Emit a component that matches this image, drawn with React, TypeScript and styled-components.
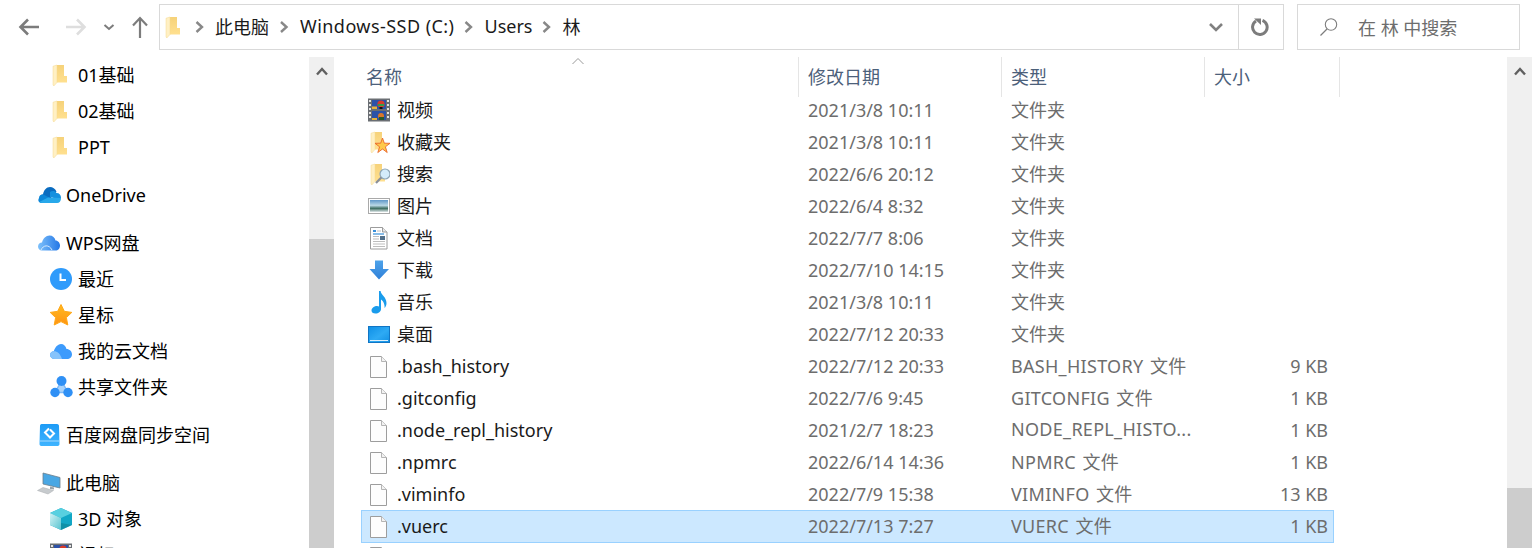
import React from "react";
import styled, { createGlobalStyle } from "styled-components";

const Global = createGlobalStyle`
  html, body { margin: 0; padding: 0; background: #fff; overflow: hidden; }
  body { font-family: "Noto Sans", "Noto Sans CJK SC", sans-serif; font-size: 18px; color: #000; }
  * { box-sizing: border-box; }
`;

const hasCjk = (s: string) => /[^\x00-\x7f]/.test(s);

const Window = styled.div`
  width: 1533px; height: 548px; overflow: hidden; display: flex; flex-direction: column; background: #fff;
`;
const Toolbar = styled.div`
  height: 57px; flex: none; display: flex; align-items: flex-start; padding: 4px 13px 0 0;
`;
const NavGroup = styled.div`
  width: 159px; height: 46px; flex: none; display: flex; align-items: center; padding-left: 17px;
`;
const NavButton = styled.svg<{ $w: number; $ml?: number }>`
  width: ${p => p.$w}px; height: 24px; flex: none; margin-left: ${p => p.$ml ?? 0}px; display: block;
`;
const AddressBar = styled.div`
  width: 1125px; height: 46px; flex: none; border: 1px solid #d9d9d9; display: flex; align-items: center; padding-left: 3px;
`;
const Crumb = styled.span<{ $wide?: boolean }>`
  white-space: nowrap; color: #1a1a1a; padding-bottom: 2px;
  letter-spacing: ${p => (p.$wide ? "0.45px" : "0")};
`;
const CrumbSep = styled.svg<{ $w: number }>`
  width: ${p => p.$w}px; height: 12px; flex: none;
`;
const Spacer = styled.div` flex: 1; `;
const AddressButton = styled.div<{ $w: number; $line?: boolean }>`
  width: ${p => p.$w}px; height: 100%; display: flex; align-items: center; justify-content: center;
  border-left: ${p => (p.$line ? "1px solid #d9d9d9" : "none")};
`;
const SearchBox = styled.div`
  width: 223px; height: 46px; flex: none; margin-left: 13px; border: 1px solid #d9d9d9;
  display: flex; align-items: center; padding-left: 21px; color: #6d6d6d; gap: 20px;
`;
const Main = styled.div`
  flex: 1; display: flex; min-height: 0; padding-right: 1px;
`;
const Sidebar = styled.div`
  width: 309px; flex: none; overflow: hidden;
`;
const NavSection = styled.div` margin-bottom: 12px; `;
const NavRow = styled.div<{ $child?: boolean }>`
  height: 36px; display: flex; align-items: center; white-space: nowrap;
  padding-left: ${p => (p.$child ? 50 : 37)}px;
`;
const NavIcon = styled.span<{ $child?: boolean }>`
  width: ${p => (p.$child ? 28 : 29)}px; flex: none; display: flex; align-items: center;
`;
const NavLabel = styled.span<{ $cjk: boolean }>`
  padding-bottom: ${p => (p.$cjk ? 2 : 0)}px;
`;
const Scrollbar = styled.div<{ $thumbTop: number }>`
  width: 25px; flex: none; background: #f0f0f0; display: flex; flex-direction: column; align-items: center;
  position: relative; padding-top: 10px;
  &::after {
    content: ""; position: absolute; left: 0; right: 0; top: ${p => p.$thumbTop}px; bottom: 0; background: #cdcdcd;
  }
`;
const FilePane = styled.div`
  flex: 1; min-width: 0; padding-left: 23px; overflow: hidden;
`;
const HeaderRow = styled.div`
  height: 40px; margin-bottom: -3px; display: grid; grid-template-columns: 442px 203px 203px 135px; color: #4c607a;
`;
const HeaderCell = styled.div`
  position: relative; height: 40px; padding: 8px 0 0 9px; border-right: 1px solid #e5e5e5; line-height: 24px;
`;
const SortCaret = styled.svg`
  position: absolute; left: 214px; top: 0; width: 14px; height: 8px;
`;
const Row = styled.div<{ $selected?: boolean }>`
  margin-left: 4px; width: 973px; height: ${p => (p.$selected ? 33 : 32)}px;
  margin-bottom: ${p => (p.$selected ? -2 : 0)}px;
  padding-bottom: ${p => (p.$selected ? 2 : 0)}px;
  display: grid; grid-template-columns: 446px 203px 1fr 100px; align-items: center; white-space: nowrap;
  border: 1px solid ${p => (p.$selected ? "#99d1ff" : "transparent")};
  background: ${p => (p.$selected ? "#cce8ff" : "transparent")};
`;
const NameCell = styled.div`
  display: flex; align-items: center; padding-left: 6px; color: #1a1a1a;
`;
const NameText = styled.span<{ $cjk: boolean }>`
  padding-bottom: ${p => (p.$cjk ? 2 : 0)}px;
`;
const FileIconSlot = styled.span`
  width: 29px; flex: none; display: flex; align-items: center;
`;
const DateCell = styled.div`
  color: #6d6d6d; overflow: hidden;
`;
const TypeCell = styled.div<{ $latin: boolean }>`
  color: #6d6d6d; overflow: hidden; padding-bottom: 2px;
  letter-spacing: ${p => (p.$latin ? "0.3px" : "0")};
  word-spacing: ${p => (p.$latin ? "1.5px" : "0")};
`;
const SizeCell = styled.div`
  color: #6d6d6d; text-align: right; padding-right: 5px;
`;

const Ic = styled.svg<{ $w?: number }>`
  width: ${p => p.$w ?? 22}px; height: 24px; display: block; flex: none;
`;

const folderShape = (id: string) => (
  <>
    <defs>
      <linearGradient id={id} x1="0" y1="0" x2="0" y2="1">
        <stop offset="0" stopColor="#f6d27a" />
        <stop offset="1" stopColor="#ffe08f" />
      </linearGradient>
    </defs>
    <path d="M7 2H14V13H17V19.5H7Z" fill={`url(#${id})`} />
    <path d="M3 3.2L7 2V19.5L3.8 23L3 22Z" fill="#fff0c4" stroke="#f4d98f" strokeWidth=".5" />
  </>
);

const FolderIcon = () => <Ic viewBox="0 0 22 24">{folderShape("fgA")}</Ic>;
const FavIcon = () => (
  <Ic viewBox="0 0 22 24">
    {folderShape("fgB")}
    <path d="M14.5 8L16.3 13.2L22 13.3L17.4 16.8L19.2 22.5L14.5 19L9.8 22.5L11.6 16.8L7 13.3L12.7 13.2Z" fill="#ffc94a" stroke="#e9672a" strokeWidth=".9" />
  </Ic>
);
const SearchFolderIcon = () => (
  <Ic viewBox="0 0 22 24">
    {folderShape("fgC")}
    <circle cx="17" cy="12" r="5" fill="#d4ecfa" stroke="#8ea6b6" strokeWidth="1.2" />
    <path d="M13.3 15.5L8 21" stroke="#8a8f98" strokeWidth="2.2" />
  </Ic>
);
const VideoIcon = () => (
  <Ic viewBox="0 0 22 24">
    <rect x="0" y="0.5" width="22" height="23" fill="#6a6e73" />
    <path d="M1 2h2v2H1zM1 6h2v2H1zM1 10h2v2H1zM1 14h2v2H1zM1 18h2v2H1zM19 2h2v2h-2zM19 6h2v2h-2zM19 10h2v2h-2zM19 14h2v2h-2zM19 18h2v2h-2z" fill="#e4e4e4" />
    <rect x="4" y="2" width="14" height="9" fill="#2c52a8" />
    <rect x="4" y="13" width="14" height="9" fill="#2c52a8" />
    <circle cx="13" cy="6" r="3.6" fill="#d93c2a" />
    <path d="M10 6h6v2h-6z" fill="#2fa04a" />
    <path d="M11.5 9h3v2h-3z" fill="#111" />
    <path d="M4 8.5h5v2.5H4zM4 20h5v2H4z" fill="#e9b23a" />
    <circle cx="13" cy="18" r="3" fill="#d9772a" />
    <path d="M11 19h5v3h-5z" fill="#2c5a2a" />
  </Ic>
);
const PictureIcon = () => (
  <Ic viewBox="0 0 22 24">
    <defs>
      <linearGradient id="pic" x1="0" y1="0" x2="0" y2="1">
        <stop offset="0" stopColor="#5f97c8" />
        <stop offset=".45" stopColor="#b9d8e6" />
        <stop offset=".7" stopColor="#3f6f62" />
        <stop offset="1" stopColor="#dfe8ea" />
      </linearGradient>
    </defs>
    <rect x=".5" y="4.5" width="21" height="15" fill="#fff" stroke="#a9a9a9" />
    <rect x="2" y="6" width="18" height="12" fill="url(#pic)" />
  </Ic>
);
const DocIcon = () => (
  <Ic viewBox="0 0 22 24">
    <path d="M2.5 1.5H14.5L19 6V23H2.5Z" fill="#fff" stroke="#9c9c9c" />
    <path d="M14.5 1.5V6H19" fill="#e8e8e8" stroke="#9c9c9c" />
    <path d="M5 8h11" stroke="#3a8fd8" strokeWidth="1.2" />
    <path d="M5 5h3" stroke="#3a8fd8" strokeWidth="2" />
    <path d="M9 5h4M5 10.5h6M5 13h6M5 15.5h12M5 18h12M5 20.5h12" stroke="#bdbdbd" />
    <rect x="12" y="10" width="5" height="4" fill="#53708a" />
  </Ic>
);
const DownloadIcon = () => (
  <Ic viewBox="0 0 22 24">
    <defs>
      <linearGradient id="dl" x1="0" y1="0" x2="0" y2="1">
        <stop offset="0" stopColor="#4ea3ea" />
        <stop offset="1" stopColor="#2f80d8" />
      </linearGradient>
    </defs>
    <path d="M7 2.5H15V11H21L11 21.5L1.5 11H7Z" fill="url(#dl)" />
  </Ic>
);
const MusicIcon = () => (
  <Ic viewBox="0 0 22 24">
    <path d="M11 1H12.6C13 5 18.5 7 18.5 13C18.5 15.5 17.5 17 16.5 18C17 15 15.5 11 13 9.5V19C13 21.7 10.5 23.5 7.5 23.5C5 23.5 3.5 22.3 3.5 20.5C3.5 18 6.5 16 9 16C9.8 16 10.5 16.2 11 16.5Z" fill="#1a9cec" />
  </Ic>
);
const DesktopIcon = () => (
  <Ic viewBox="0 0 22 24">
    <defs>
      <linearGradient id="dk" x1="0" y1="0" x2="1" y2="1">
        <stop offset="0" stopColor="#0e8fe6" />
        <stop offset=".55" stopColor="#2eaaf4" />
        <stop offset="1" stopColor="#1290e4" />
      </linearGradient>
    </defs>
    <rect x=".5" y="4.5" width="21" height="16" fill="url(#dk)" stroke="#1175c4" />
    <path d="M2 18.5h18" stroke="#dff1fc" strokeWidth="1" />
  </Ic>
);
const FileIcon = () => (
  <Ic viewBox="0 0 22 24">
    <path d="M2.5 2.5H13.5L18.5 7.5V23.5H2.5Z" fill="#fdfdfd" stroke="#9d9d9d" />
    <path d="M13.5 2.5V7.5H18.5" fill="#f2f2f2" stroke="#b5b5b5" />
  </Ic>
);
const OneDriveIcon = () => (
  <Ic $w={24} viewBox="0 0 24 24">
    <path d="M6 11.5C6.5 7.5 9.5 4 13 4C15.8 4 18 5.5 19.5 8.5L13 16H4.5C2 14 3 11.5 6 11.5Z" fill="#0a6cc0" />
    <path d="M2 15C2 12.5 4 11 6.5 11.5L13 15L12 20H4.5C3 20 0 18.5 2 15Z" fill="#0c86d8" />
    <path d="M13 9C15 7.5 18 7.5 19.5 10C22.5 10 24 12 24 15C24 15 18 16 13 14Z" fill="#1490df" />
    <path d="M5 20C4 20 3 19.7 2.3 19L11 14.5L24 15C24 18 22.5 20 20 20Z" fill="#28a8ea" />
  </Ic>
);
const WpsCloudIcon = () => (
  <Ic $w={24} viewBox="0 0 24 24">
    <defs>
      <linearGradient id="wc" x1="0" y1="0" x2="1" y2="0">
        <stop offset="0" stopColor="#7ec1fb" />
        <stop offset="1" stopColor="#2477e6" />
      </linearGradient>
    </defs>
    <path d="M5 19.5C2.5 19.5 1 17.5 1 15.5C1 13 3 11.5 5 11.5C6 7.5 9 4.5 12.5 4.5C15.5 4.5 18 6.5 18.5 9.5C21 9.5 23 12 23 14.5C23 17.5 21 19.5 18.5 19.5Z" fill="url(#wc)" />
    <path d="M4 19C6 14 12 13 15 19" fill="none" stroke="#d6ebff" strokeWidth="1" />
  </Ic>
);
const RecentIcon = () => (
  <Ic viewBox="0 0 22 24">
    <circle cx="11" cy="12" r="11" fill="#2f9bfb" />
    <path d="M10.5 6.5V13H16" fill="none" stroke="#fff" strokeWidth="2" />
  </Ic>
);
const StarIcon = () => (
  <Ic viewBox="0 0 22 24">
    <defs>
      <linearGradient id="st" x1="0" y1="0" x2="0" y2="1">
        <stop offset="0" stopColor="#ffba1f" />
        <stop offset="1" stopColor="#ff9413" />
      </linearGradient>
    </defs>
    <path d="M11 1.5L14.3 8.3L21.8 9.4L16.4 14.6L17.8 22L11 18.6L4.2 22L5.6 14.6L.2 9.4L7.7 8.3Z" fill="url(#st)" stroke="#ffa818" strokeLinejoin="round" strokeWidth="1" />
  </Ic>
);
const CloudDocIcon = () => (
  <Ic viewBox="0 0 22 24">
    <path d="M4.5 20C2 20 0 18.3 0 16C0 13.8 1.8 12.3 3.8 12.2C4.8 8.8 7.5 5 11 5C13.8 5 15.8 7 16.5 10C19.5 10 22 12.3 22 15.2C22 18 20 20 17 20Z" fill="#3d9bfc" />
    <path d="M4.5 20C2 20 0 18.3 0 16C0 13.8 1.8 12.3 3.8 12.2C7 12 10 14 12 20Z" fill="#86c3fb" />
  </Ic>
);
const ShareIcon = () => (
  <Ic $w={23} viewBox="0 0 23 24">
    <path d="M11.5 6L5 17.5H18Z" fill="#a9d3fb" stroke="#7db9f7" strokeWidth="1.5" />
    <circle cx="11.5" cy="6" r="5" fill="#2f90f5" />
    <circle cx="5" cy="17.5" r="4.7" fill="#2f90f5" />
    <circle cx="18" cy="17.5" r="4.7" fill="#2f90f5" />
  </Ic>
);
const BaiduIcon = () => (
  <Ic $w={24} viewBox="0 0 24 24">
    <defs>
      <linearGradient id="bd" x1="0" y1="0" x2="0" y2="1">
        <stop offset="0" stopColor="#1d9bf6" />
        <stop offset="1" stopColor="#3fb4ff" />
      </linearGradient>
    </defs>
    <path d="M4.5 1H20C21.5 1 22 2 22 3L22.5 21C22.5 22.5 21.5 23 20 23H5C3.5 23 2.5 22.5 2.5 21L3 3C3 2 3.5 1 4.5 1Z" fill="url(#bd)" />
    <path d="M3 18H22" stroke="#a9dcff" strokeWidth="1" />
    <path d="M12 5.5L8 9.5L11 12.5M13 6.5L17 10.5L13 14.5L11 12.5" fill="none" stroke="#fff" strokeWidth="2" />
  </Ic>
);
const PcIcon = () => (
  <Ic $w={24} viewBox="0 0 24 24">
    <path d="M6 2L23 6.5V17L6 13Z" fill="#49a7e4" stroke="#6d7f8c" strokeWidth=".8" />
    <path d="M13 15.5L17 16.5V18.5L13 18Z" fill="#9aa3aa" />
    <path d="M.5 19.5L6 16.5L16.5 19.5L11 23Z" fill="#c7cbce" stroke="#a9adb0" strokeWidth=".5" />
  </Ic>
);
const CubeIcon = () => (
  <Ic viewBox="0 0 22 24">
    <defs>
      <linearGradient id="cb" x1="0" y1="0" x2="1" y2="1">
        <stop offset="0" stopColor="#d3f3f5" />
        <stop offset="1" stopColor="#57c4d0" />
      </linearGradient>
    </defs>
    <path d="M11 1L22 6V18L11 23L0 18V6Z" fill="#12a7c6" />
    <path d="M11 1L22 6L11 11L0 6Z" fill="#58d0e0" />
    <path d="M0 6L11 11V23L0 18Z" fill="url(#cb)" />
    <path d="M11 16L22 18L11 23Z" fill="#0b7d8e" opacity=".55" />
  </Ic>
);

const Chevron = ({ w }: { w: number }) => (
  <CrumbSep $w={w} viewBox={`0 0 ${w} 12`}>
    <path d={`M${w / 2 - 3.5} 1L${w / 2 + 2} 6L${w / 2 - 3.5} 11`} fill="none" stroke="#888" strokeWidth="2.4" />
  </CrumbSep>
);

const UpChevron = () => (
  <svg width="12" height="9" viewBox="0 0 12 9" style={{ position: "relative", zIndex: 1 }}>
    <path d="M1 7.5L6 2L11 7.5" fill="none" stroke="#606060" strokeWidth="2.4" />
  </svg>
);

type NavItem = { icon: React.ReactNode; label: string; child?: boolean };
const navSections: NavItem[][] = [
  [
    { icon: <FolderIcon />, label: "01基础", child: true },
    { icon: <FolderIcon />, label: "02基础", child: true },
    { icon: <FolderIcon />, label: "PPT", child: true },
  ],
  [{ icon: <OneDriveIcon />, label: "OneDrive" }],
  [
    { icon: <WpsCloudIcon />, label: "WPS网盘" },
    { icon: <RecentIcon />, label: "最近", child: true },
    { icon: <StarIcon />, label: "星标", child: true },
    { icon: <CloudDocIcon />, label: "我的云文档", child: true },
    { icon: <ShareIcon />, label: "共享文件夹", child: true },
  ],
  [{ icon: <BaiduIcon />, label: "百度网盘同步空间" }],
  [
    { icon: <PcIcon />, label: "此电脑" },
    { icon: <CubeIcon />, label: "3D 对象", child: true },
    { icon: <VideoIcon />, label: "视频", child: true },
  ],
];

type FileItem = { icon: React.ReactNode; name: string; date: string; type: string; size?: string; selected?: boolean };
const files: FileItem[] = [
  { icon: <VideoIcon />, name: "视频", date: "2021/3/8 10:11", type: "文件夹" },
  { icon: <FavIcon />, name: "收藏夹", date: "2021/3/8 10:11", type: "文件夹" },
  { icon: <SearchFolderIcon />, name: "搜索", date: "2022/6/6 20:12", type: "文件夹" },
  { icon: <PictureIcon />, name: "图片", date: "2022/6/4 8:32", type: "文件夹" },
  { icon: <DocIcon />, name: "文档", date: "2022/7/7 8:06", type: "文件夹" },
  { icon: <DownloadIcon />, name: "下载", date: "2022/7/10 14:15", type: "文件夹" },
  { icon: <MusicIcon />, name: "音乐", date: "2021/3/8 10:11", type: "文件夹" },
  { icon: <DesktopIcon />, name: "桌面", date: "2022/7/12 20:33", type: "文件夹" },
  { icon: <FileIcon />, name: ".bash_history", date: "2022/7/12 20:33", type: "BASH_HISTORY 文件", size: "9 KB" },
  { icon: <FileIcon />, name: ".gitconfig", date: "2022/7/6 9:45", type: "GITCONFIG 文件", size: "1 KB" },
  { icon: <FileIcon />, name: ".node_repl_history", date: "2021/2/7 18:23", type: "NODE_REPL_HISTO...", size: "1 KB" },
  { icon: <FileIcon />, name: ".npmrc", date: "2022/6/14 14:36", type: "NPMRC 文件", size: "1 KB" },
  { icon: <FileIcon />, name: ".viminfo", date: "2022/7/9 15:38", type: "VIMINFO 文件", size: "13 KB" },
  { icon: <FileIcon />, name: ".vuerc", date: "2022/7/13 7:27", type: "VUERC 文件", size: "1 KB", selected: true },
  { icon: <FileIcon />, name: "", date: "", type: "" },
];

export default function App() {
  return (
    <Window>
      <Global />
      <Toolbar>
        <NavGroup>
          <NavButton $w={24} viewBox="0 0 24 24">
            <path d="M22 12H4M11 4.5L3.5 12L11 19.5" fill="none" stroke="#7c7c7c" strokeWidth="2.6" />
          </NavButton>
          <NavButton $w={24} $ml={22} viewBox="0 0 24 24">
            <path d="M3 12H21M14 4.5L21.5 12L14 19.5" fill="none" stroke="#dedede" strokeWidth="2.6" />
          </NavButton>
          <NavButton $w={12} $ml={16} viewBox="0 0 12 24">
            <path d="M1.5 10L6 14L10.5 10" fill="none" stroke="#7c7c7c" strokeWidth="2" />
          </NavButton>
          <NavButton $w={18} $ml={16} viewBox="0 0 18 24">
            <path d="M9 23V4M2 10.5L9 3L16 10.5" fill="none" stroke="#7c7c7c" strokeWidth="2.2" />
          </NavButton>
        </NavGroup>
        <AddressBar>
          <FolderIcon />
          <Chevron w={30} />
          <Crumb>此电脑</Crumb>
          <Chevron w={31} />
          <Crumb $wide>Windows-SSD (C:)</Crumb>
          <Chevron w={30} />
          <Crumb>Users</Crumb>
          <Chevron w={30} />
          <Crumb>林</Crumb>
          <Spacer />
          <AddressButton $w={44}>
            <svg width="16" height="10" viewBox="0 0 16 10">
              <path d="M2 2L8 8L14 2" fill="none" stroke="#808080" strokeWidth="2.6" />
            </svg>
          </AddressButton>
          <AddressButton $w={45} $line>
            <svg width="20" height="20" viewBox="0 0 20 20">
              <path d="M5 4A7.3 7.3 0 1 0 11.5 3.4" fill="none" stroke="#7c7c7c" strokeWidth="3" />
              <path d="M3 1.5H10V8Z" fill="#7c7c7c" />
            </svg>
          </AddressButton>
        </AddressBar>
        <SearchBox>
          <svg width="19" height="20" viewBox="0 0 19 20" style={{ flex: "none" }}>
            <circle cx="12" cy="7.5" r="5.7" fill="none" stroke="#7d7d7d" strokeWidth="1.1" />
            <path d="M8 12L1.5 18.5" stroke="#7d7d7d" strokeWidth="1.2" />
          </svg>
          <span>在 林 中搜索</span>
        </SearchBox>
      </Toolbar>
      <Main>
        <Sidebar>
          {navSections.map((section, i) => (
            <NavSection key={i}>
              {section.map(item => (
                <NavRow key={item.label} $child={item.child}>
                  <NavIcon $child={item.child}>{item.icon}</NavIcon>
                  <NavLabel $cjk={hasCjk(item.label)}>{item.label}</NavLabel>
                </NavRow>
              ))}
            </NavSection>
          ))}
        </Sidebar>
        <Scrollbar $thumbTop={182}>
          <UpChevron />
        </Scrollbar>
        <FilePane>
          <HeaderRow>
            <HeaderCell>
              <SortCaret viewBox="0 0 14 8">
                <path d="M1.5 7L7 1.5L12.5 7" fill="none" stroke="#9a9a9a" strokeWidth="1" />
              </SortCaret>
              名称
            </HeaderCell>
            <HeaderCell>修改日期</HeaderCell>
            <HeaderCell>类型</HeaderCell>
            <HeaderCell>大小</HeaderCell>
          </HeaderRow>
          {files.map((f, i) => (
            <Row key={i} $selected={f.selected}>
              <NameCell>
                <FileIconSlot>{f.icon}</FileIconSlot>
                <NameText $cjk={hasCjk(f.name)}>{f.name}</NameText>
              </NameCell>
              <DateCell>{f.date}</DateCell>
              <TypeCell $latin={/[A-Z]/.test(f.type)}>{f.type}</TypeCell>
              <SizeCell>{f.size}</SizeCell>
            </Row>
          ))}
        </FilePane>
        <Scrollbar $thumbTop={431}>
          <UpChevron />
        </Scrollbar>
      </Main>
    </Window>
  );
}
